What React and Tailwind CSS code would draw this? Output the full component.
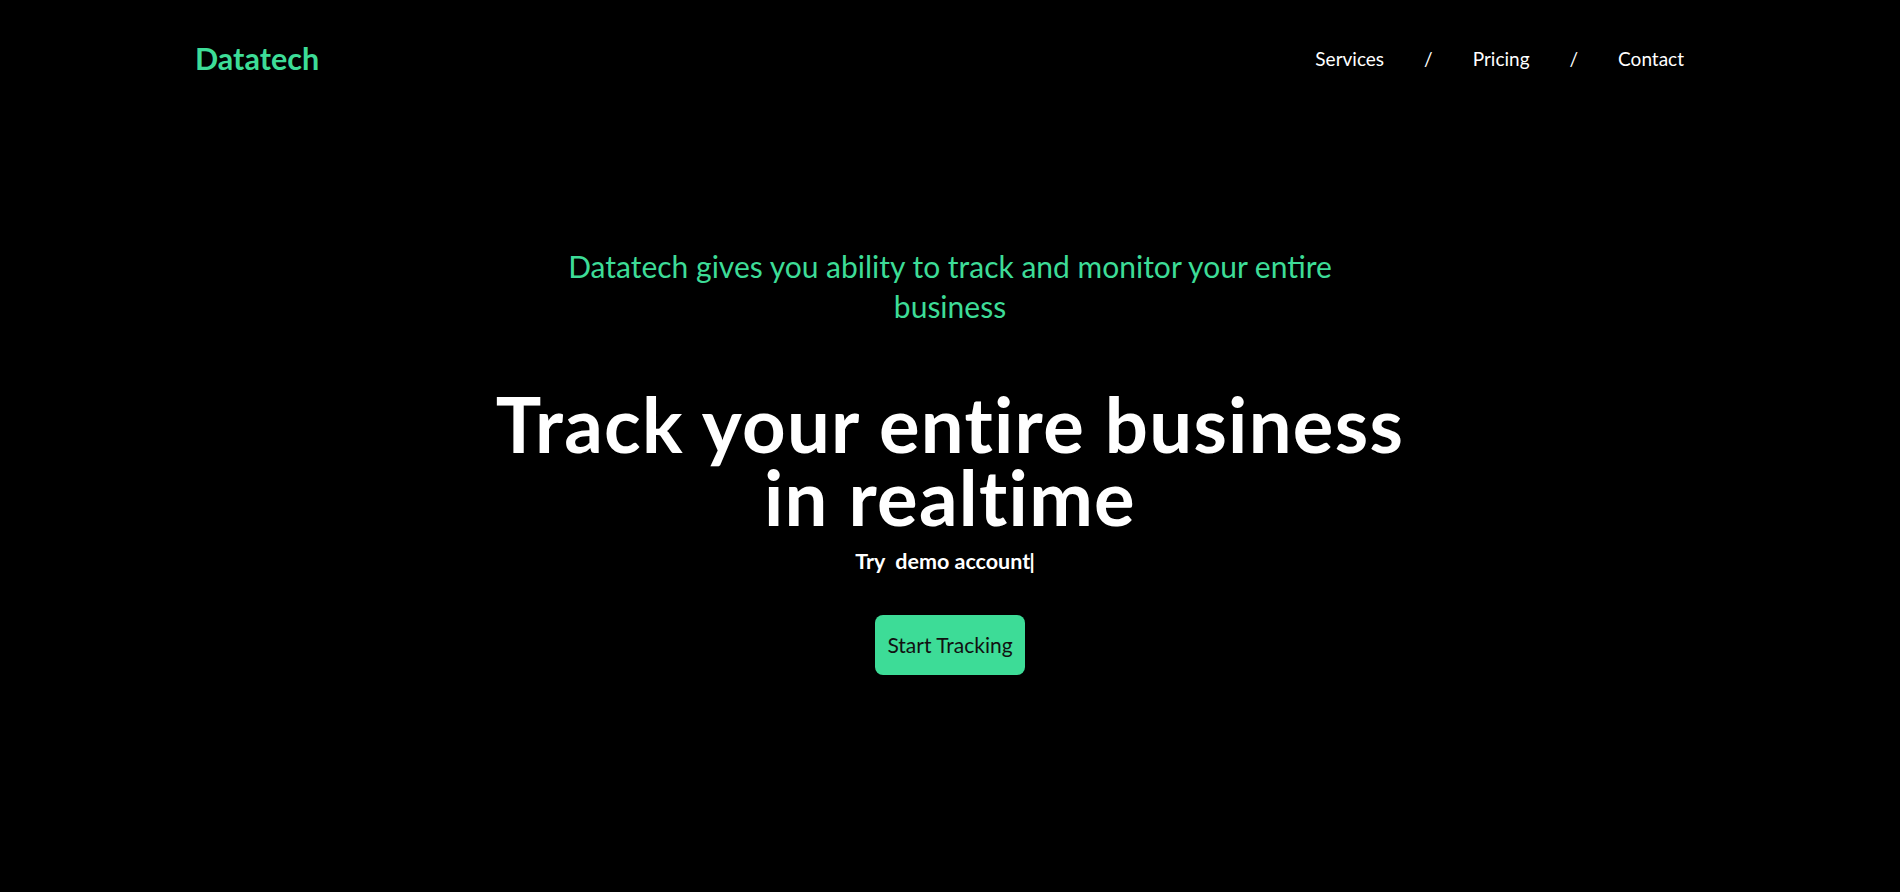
export default function App() {
  return (
    <div className="min-h-[892px] bg-black font-['Segoe_UI','Lato','Noto_Sans',sans-serif] text-white">
      <header className="flex h-[118px] items-center justify-between pl-[195px] pr-[216px]">
        <a href="#" className="text-[30.5px] font-bold text-[#3ddc97]">
          Datatech
        </a>
        <nav className="flex items-center gap-[40px] text-[19px]">
          <a href="#">Services</a>
          <span>/</span>
          <a href="#">Pricing</a>
          <span>/</span>
          <a href="#">Contact</a>
        </nav>
      </header>

      <main className="flex flex-col items-center pt-[128px] text-center">
        <p className="max-w-[800px] text-[30px] leading-[40px] text-[#3ddc97]">
          Datatech gives you ability to track and monitor your entire business
        </p>
        <h1 className="mt-[61px] max-w-[960px] text-[76px] font-bold leading-[73px] tracking-[1.3px]">
          Track your entire business in realtime
        </h1>
        <p className="mt-[14px] whitespace-pre pr-[10px] text-[21.5px] font-bold leading-[28px]">
          Try  demo account<span className="-ml-[1px]">|</span>
        </p>
        <button
          type="button"
          className="mt-[40px] h-[60px] w-[150px] rounded-lg bg-[#3ddc97] text-[21px] text-[#111]"
        >
          Start Tracking
        </button>
      </main>
    </div>
  );
}
